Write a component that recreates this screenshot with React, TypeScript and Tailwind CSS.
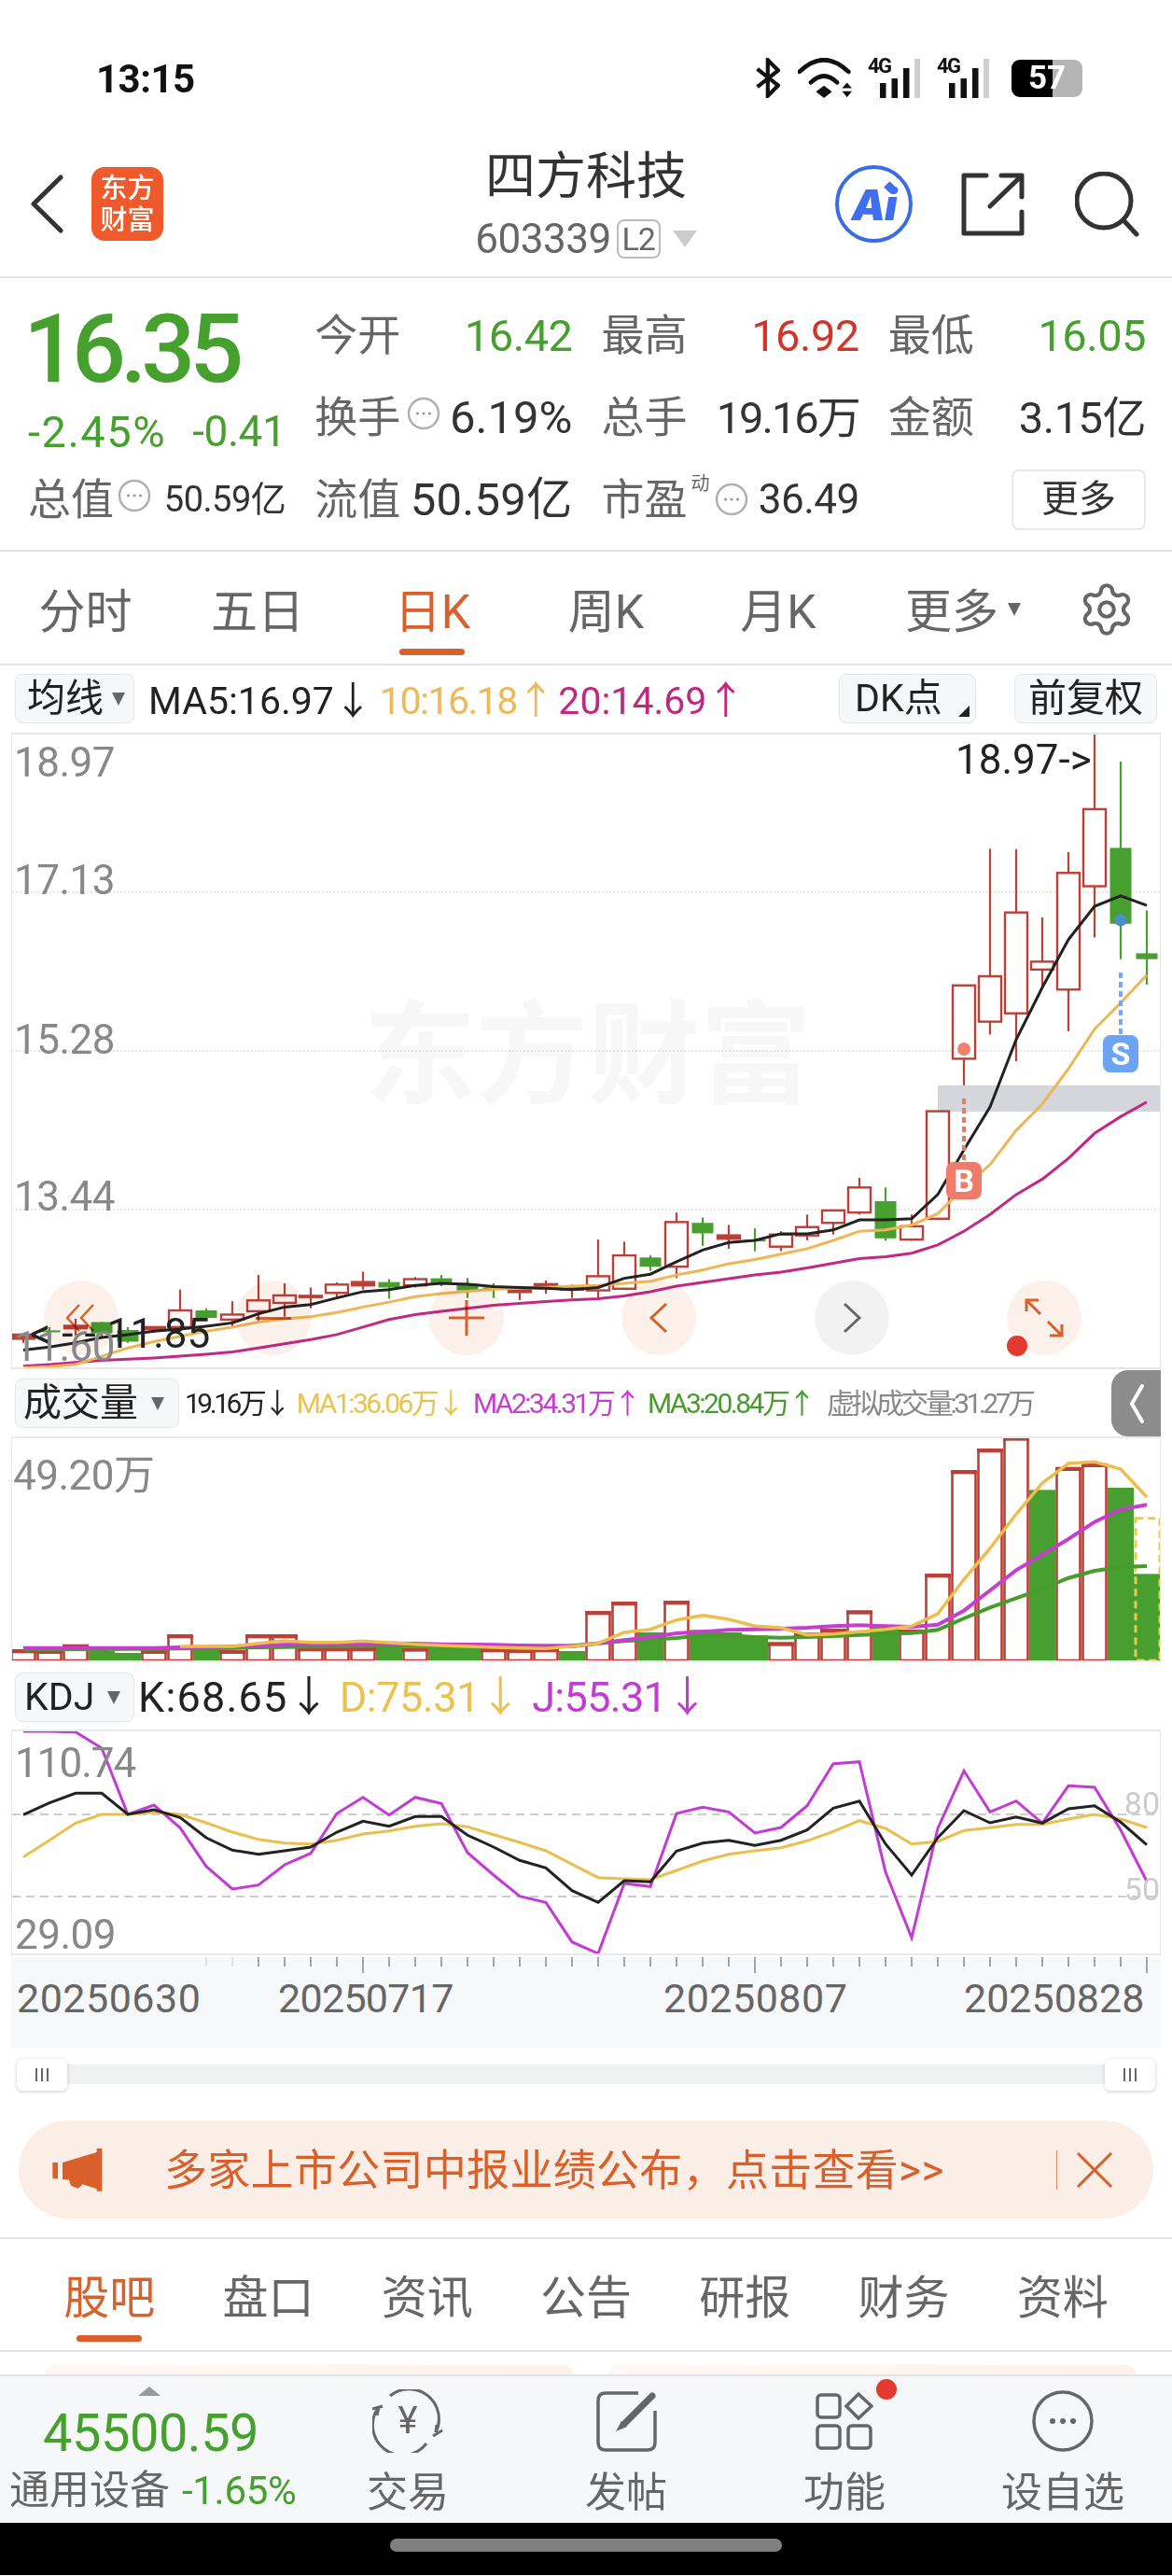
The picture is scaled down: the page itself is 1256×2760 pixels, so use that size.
import { Settings } from "lucide-react";

const RED = "#bc3f38";
const GREEN = "#469f2e";

// candle x in page px, 44 trading days
const cx = (i: number) => 25 + 28 * i;
// chart values were read off at these scales
const mainY = (v: number) => 780 + v / 2.24;
const volY = (v: number) => 1460 + v / 3;
const kdjY = (v: number) => 1780 + v / 3;

// wickTop, wickBottom, bodyTop, up
const candles: [number, number, number, boolean][] = [
	[1458, 1478, 1458, true], [1440, 1480, 1448, false], [1420, 1460, 1437, true], [1428, 1465, 1428, false],
	[1440, 1478, 1447, false], [1440, 1447, 1440, true], [1350, 1440, 1400, true], [1395, 1420, 1400, false],
	[1378, 1440, 1410, true], [1315, 1425, 1376, true], [1335, 1415, 1364, true], [1345, 1395, 1365, true],
	[1333, 1370, 1338, true], [1307, 1350, 1332, true], [1325, 1372, 1332, false], [1320, 1345, 1325, true],
	[1315, 1342, 1323, false], [1322, 1370, 1337, false], [1335, 1370, 1345, false], [1345, 1375, 1350, true],
	[1328, 1360, 1337, true], [1338, 1370, 1345, true], [1230, 1370, 1318, true], [1235, 1350, 1268, true],
	[1268, 1305, 1273, false], [1165, 1322, 1188, true], [1177, 1245, 1190, false], [1195, 1252, 1220, true],
	[1203, 1258, 1230, false], [1210, 1258, 1218, true], [1170, 1232, 1200, true], [1160, 1218, 1160, true],
	[1082, 1170, 1105, true], [1105, 1233, 1138, false], [1170, 1233, 1198, true], [922, 1180, 922, true],
	[620, 860, 620, true], [292, 738, 598, true], [293, 802, 445, true], [457, 625, 563, true],
	[300, 730, 350, true], [15, 505, 197, true], [83, 557, 290, false], [440, 618, 543, false],
];
const bodyBottoms = [
	1468, 1451, 1443, 1455, 1475, 1445, 1440, 1418, 1422, 1402, 1382, 1368, 1358, 1340, 1345, 1340, 1335, 1352, 1348, 1356, 1347, 1350,
	1352, 1348, 1295, 1295, 1215, 1228, 1233, 1247, 1220, 1190, 1165, 1227, 1230, 1180, 796, 707, 687, 582, 630, 382, 472, 557,
];

const maMain = {
	black: [1495, 1488, 1478, 1465, 1458, 1450, 1445, 1438, 1430, 1408, 1392, 1386, 1370, 1355, 1350, 1340, 1335, 1337, 1343, 1345, 1347, 1350, 1345, 1323, 1313, 1283, 1255, 1237, 1232, 1216, 1216, 1207, 1183, 1183, 1180, 1122, 1015, 912, 750, 625, 510, 430, 405, 428],
	yellow: [1538, 1535, 1530, 1510, 1490, 1475, 1462, 1450, 1440, 1428, 1420, 1415, 1405, 1392, 1380, 1367, 1360, 1354, 1349, 1347, 1345, 1342, 1340, 1335, 1330, 1315, 1303, 1288, 1278, 1265, 1252, 1232, 1210, 1207, 1195, 1168, 1105, 1050, 968, 905, 820, 725, 662, 595],
	pink: [1534, 1530, 1525, 1520, 1517, 1514, 1510, 1505, 1500, 1490, 1480, 1470, 1458, 1440, 1422, 1410, 1402, 1395, 1388, 1383, 1379, 1375, 1372, 1365, 1355, 1342, 1333, 1324, 1315, 1308, 1298, 1287, 1276, 1271, 1263, 1243, 1210, 1170, 1122, 1085, 1035, 975, 935, 900],
};

const volBars: [number, boolean][] = [
	[928, true], [930, true], [912, true], [930, false], [936, false], [930, true], [880, true], [920, false], [930, true], [880, true], [880, true],
	[922, true], [922, true], [922, true], [915, false], [923, true], [915, false], [915, false], [925, true], [927, true], [925, true], [930, false],
	[805, true], [775, true], [870, false], [772, true], [862, false], [870, false], [880, false], [905, true], [875, true], [862, true], [803, true],
	[848, false], [865, true], [685, true], [352, true], [283, true], [245, true], [412, false], [342, true], [330, true], [405, false], [682, false],
];
const volYellow = [915, 915, 915, 905, 897, 902, 902, 898, 903, 908, 912, 915, 918, 920, 922, 915, 905, 870, 860, 830, 815, 828, 850, 855, 878, 875, 868, 860, 850, 810, 700, 600, 490, 390, 327, 322, 345, 435];
const volPink = [920, 920, 920, 920, 920, 920, 918, 917, 915, 912, 910, 909, 908, 906, 905, 906, 908, 909, 910, 912, 915, 915, 905, 895, 885, 873, 868, 862, 860, 858, 855, 850, 847, 850, 852, 845, 800, 735, 670, 620, 570, 515, 475, 460];
const volGreen = [925, 925, 924, 924, 923, 923, 922, 921, 920, 918, 917, 916, 915, 914, 913, 913, 913, 913, 913, 913, 913, 913, 905, 898, 893, 888, 880, 880, 885, 887, 885, 882, 878, 875, 872, 862, 825, 790, 760, 730, 695, 672, 660, 657];

const kdjK = [496, 458, 427, 427, 495, 480, 505, 570, 610, 623, 612, 600, 552, 517, 533, 502, 502, 562, 600, 643, 667, 740, 778, 708, 712, 613, 587, 578, 595, 578, 545, 475, 452, 590, 690, 570, 483, 522, 503, 523, 477, 467, 520, 593];
const kdjD = [632, 578, 523, 495, 495, 488, 495, 522, 552, 575, 587, 590, 578, 558, 548, 533, 525, 535, 560, 585, 612, 655, 698, 702, 705, 675, 645, 623, 612, 602, 580, 550, 515, 540, 590, 582, 547, 538, 527, 527, 510, 495, 510, 537];
const kdjJ = [228, 228, 230, 282, 495, 465, 538, 662, 735, 722, 657, 620, 492, 440, 497, 440, 460, 618, 690, 758, 778, 905, 942, 717, 727, 492, 472, 487, 555, 537, 467, 332, 326, 680, 892, 540, 355, 487, 452, 523, 403, 408, 545, 710];

const pts = (vals: number[], toY: (v: number) => number, start = 0) =>
	vals.map((v, i) => `${cx(i + start)},${toY(v).toFixed(1)}`).join(" ");

function Tri({ className }: { className: string }) {
	return <span className={`inline-block border-x-[7px] border-t-[14px] border-x-transparent ${className}`} />;
}

function Dots({ className }: { className: string }) {
	return (
		<svg viewBox="0 0 36 36" className={className}>
			<circle cx="18" cy="18" r="16" fill="none" stroke="#b0b0b0" strokeWidth="2.5" />
			<circle cx="11.5" cy="18" r="1.6" fill="#999" />
			<circle cx="18" cy="18" r="1.6" fill="#999" />
			<circle cx="24.5" cy="18" r="1.6" fill="#999" />
		</svg>
	);
}

function Signal() {
	return (
		<div className="relative w-[57px] h-[43px]">
			<span className="absolute left-0 top-0 text-[22px] leading-[18px] font-bold tracking-[-1.5px] text-[#111]">4G</span>
			<svg viewBox="0 0 57 43" className="absolute inset-0 w-[57px] h-[43px]">
				<rect x="13" y="27" width="6.5" height="16" fill="#111" />
				<rect x="25.5" y="22" width="6.5" height="21" fill="#111" />
				<rect x="38" y="11" width="6.5" height="32" fill="#111" />
				<rect x="50" y="1" width="6" height="42" fill="#cfcfcf" />
			</svg>
		</div>
	);
}

function StatusBar() {
	return (
		<div className="h-[150px] pt-[62px] pl-[103px] pr-[96px] flex items-start justify-between">
			<div className="text-[42px] leading-[43px] font-bold text-[#111] tracking-[-0.5px] mt-[1px]">13:15</div>
			<div className="flex items-center h-[43px]">
				<svg viewBox="20 18 85 134" className="w-[28px] h-[43px]">
					<path d="M30 55 L100 110 L65 145 V25 L100 60 L30 115" fill="none" stroke="#111" strokeWidth="13" />
				</svg>
				<svg viewBox="165 20 176 130" className="w-[58px] h-[43px] ml-[19px]">
					<path d="M170 65 Q250 -12 330 65" fill="none" stroke="#111" strokeWidth="14" strokeLinecap="round" />
					<path d="M207 100 Q250 58 293 100" fill="none" stroke="#111" strokeWidth="14" strokeLinecap="round" />
					<path d="M250 110 L276 130 L250 150 L224 130 Z" fill="#111" />
					<path d="M325 100 L341 118 H309 Z M309 128 H341 L325 148 Z" fill="#111" />
				</svg>
				<div className="ml-[17px]"><Signal /></div>
				<div className="ml-[17px]"><Signal /></div>
				<div className="ml-[23px] relative w-[76px] h-[40px] rounded-[9px] overflow-hidden bg-[#b4b4b4]">
					<div className="absolute left-0 top-0 h-full w-[44px] bg-black" />
					<div className="absolute inset-0 flex items-center justify-center text-[35px] font-bold leading-none text-white">57</div>
				</div>
			</div>
		</div>
	);
}

function NavBar() {
	return (
		<div className="h-[148px] border-b-2 border-[#e2e2e2] grid grid-cols-[1fr_auto_1fr] items-start">
			<div className="flex items-center pl-[32px] pt-[29px]">
				<svg viewBox="0 0 36 63" className="w-[36px] h-[63px]">
					<path d="M33 3 L4 31.5 L33 60" fill="none" stroke="#333" strokeWidth="5" strokeLinecap="round" strokeLinejoin="round" />
				</svg>
				<div className="ml-[30px] w-[77px] h-[79px] rounded-[14px] bg-[#ee5a2b] flex flex-col items-center justify-center text-white text-[29px] leading-[34px] font-medium">
					<span>东方</span>
					<span>财富</span>
				</div>
			</div>
			<div className="flex flex-col items-center pt-[8px]">
				<div className="text-[54px] leading-[64px] text-[#333]">四方科技</div>
				<div className="flex items-center mt-[13px] h-[42px]">
					<span className="text-[44px] leading-none text-[#666] tracking-[-0.5px]">603339</span>
					<span className="ml-[6px] w-[47px] h-[42px] rounded-[8px] border-2 border-[#bbb] flex items-center justify-center text-[34px] leading-none text-[#666] tracking-[-1px]">L2</span>
					<span className="ml-[13px] border-x-[13px] border-t-[18px] border-x-transparent border-t-[#ccc]" />
				</div>
			</div>
			<div className="flex items-center justify-end pr-[34px] pt-[27px]">
				<div className="relative w-[83px] h-[83px] rounded-full border-[4px] border-[#3b6de0] flex items-center justify-center font-['Inter',sans-serif] text-[46px] leading-none font-black italic text-[#3f6ff0] tracking-[-1px]">
					Ai
					<span className="absolute left-[50px] top-[15px] w-[9px] h-[9px] rotate-45 bg-[#3f6ff0]" />
				</div>
				<svg viewBox="0 0 68 68" className="w-[68px] h-[68px] ml-[52px]">
					<path d="M27 3 H3 V65 H65 V42" fill="none" stroke="#333" strokeWidth="5" strokeLinecap="round" strokeLinejoin="round" />
					<path d="M31 36 L64 4 M43 3 H65 V26" fill="none" stroke="#333" strokeWidth="5" strokeLinecap="round" strokeLinejoin="round" />
				</svg>
				<svg viewBox="0 0 70 70" className="w-[70px] h-[70px] ml-[54px]">
					<circle cx="31" cy="31" r="29" fill="none" stroke="#333" strokeWidth="5" />
					<path d="M52 52 L66 67" stroke="#333" strokeWidth="5" strokeLinecap="round" />
				</svg>
			</div>
		</div>
	);
}

function Stat({ label, value, color = "text-[#333]", size = "text-[47px] tracking-[-0.5px]" }: { label: string; value: string; color?: string; size?: string }) {
	return (
		<div className="flex items-center justify-between">
			<span className="text-[46px] text-[#666] leading-none">{label}</span>
			<span className={`leading-none ${size} ${color}`}>{value}</span>
		</div>
	);
}

function Quote() {
	return (
		<div className="h-[293px] border-b-2 border-[#e2e2e2] pl-[30px] pr-[28px] pt-[17px] grid grid-cols-4 gap-x-[31px] grid-rows-[88px_88px_88px] items-center">
			<div className="text-[102px] leading-none font-medium text-[#45a02e] tracking-[-6px] mt-[30px] -ml-[5px]">16.35</div>
			<Stat label="今开" value="16.42" color="text-[#45a02e]" />
			<Stat label="最高" value="16.92" color="text-[#d0352b]" />
			<Stat label="最低" value="16.05" color="text-[#45a02e]" />

			<div className="flex justify-between items-center leading-none text-[#45a02e] mt-[30px]">
				<span className="text-[47px] tracking-[1.5px]">-2.45%</span>
				<span className="text-[46px] tracking-[-0.5px]">-0.41</span>
			</div>
			<div className="flex items-center">
				<span className="text-[46px] text-[#666] leading-none">换手</span>
				<Dots className="w-[36px] h-[36px] ml-[7px] -mt-[8px]" />
				<span className="ml-auto text-[49px] leading-none text-[#333]">6.19%</span>
			</div>
			<Stat label="总手" value="19.16万" size="text-[47px] tracking-[-2px]" />
			<Stat label="金额" value="3.15亿" />

			<div className="flex items-center">
				<span className="text-[46px] text-[#666] leading-none">总值</span>
				<Dots className="w-[36px] h-[36px] ml-[4px] -mt-[8px]" />
				<span className="ml-auto text-[38px] leading-none text-[#333] tracking-[-0.5px]">50.59亿</span>
			</div>
			<Stat label="流值" value="50.59亿" size="text-[49px] tracking-[0.3px]" />
			<div className="flex items-center">
				<span className="text-[46px] text-[#666] leading-none">市盈</span>
				<span className="text-[20px] text-[#666] leading-none ml-[4px] -mt-[34px]">动</span>
				<Dots className="w-[36px] h-[36px] ml-[5px]" />
				<span className="ml-auto text-[44px] leading-none text-[#333] tracking-[-0.5px]">36.49</span>
			</div>
			<div className="flex justify-end">
				<div className="w-[144px] h-[65px] rounded-[8px] border-2 border-[#e8e8e8] flex items-center justify-center text-[40px] text-[#333] leading-none">更多</div>
			</div>
		</div>
	);
}

function ChartTabs() {
	return (
		<div className="h-[122px] border-b-2 border-[#e2e2e2] flex items-start pt-[35px] text-[50px] leading-[60px] text-[#666]">
			<div className="w-[183px] text-center">分时</div>
			<div className="w-[186px] text-center">五日</div>
			<div className="w-[189px] flex flex-col items-center text-[#d9602a]">
				<span>日K</span>
				<span className="w-[70px] h-[7px] rounded-full bg-[#d9602a] mt-[9px] -ml-[2px]" />
			</div>
			<div className="w-[183px] text-center">周K</div>
			<div className="w-[186px] text-center">月K</div>
			<div className="flex items-center ml-[43px]">
				<span>更多</span>
				<Tri className="ml-[10px] -mt-[6px] border-t-[#666]" />
			</div>
			<Settings className="ml-[61px] -mt-[4px] w-[62px] h-[62px] text-[#666]" strokeWidth={1.6} />
		</div>
	);
}

function ChipBtn({ label, w, children }: { label: string; w: string; children?: React.ReactNode }) {
	return (
		<div className={`relative flex items-center justify-center h-[53px] rounded-[8px] border border-[#e4e6ea] bg-[#f6f7f9] text-[#222] text-[41px] leading-none ${w}`}>
			{label}
			{children}
		</div>
	);
}

function MainToolbar() {
	return (
		<div className="h-[72px] pl-[16px] pr-[16px] pt-[9px] flex items-start">
			<ChipBtn label="均线" w="w-[128px] justify-start pl-[12px]">
				<Tri className="ml-[9px] border-t-[#666]" />
			</ChipBtn>
			<div className="h-[53px] flex items-center text-[41px] leading-none mt-[3px]">
				<span className="ml-[15px] text-[#222]">MA5:16.97↓</span>
				<span className="ml-[8px] text-[#edb95a] tracking-[-1.5px]">10:16.18↑</span>
				<span className="ml-[5px] text-[#c0287f]">20:14.69↑</span>
			</div>
			<div className="ml-auto flex gap-[41px]">
				<ChipBtn label="DK点" w="w-[147px] justify-start pl-[16px]">
					<span className="absolute right-[6px] bottom-[6px] border-l-[12px] border-b-[12px] border-l-transparent border-b-[#222]" />
				</ChipBtn>
				<ChipBtn label="前复权" w="w-[153px]" />
			</div>
		</div>
	);
}

function CandleSvg() {
	return (
		<svg viewBox="13 788 1230 678" className="absolute inset-0 w-[1230px] h-[678px]">
			{[957, 1127, 1297].map((y) => (
				<line key={y} x1="13" x2="1243" y1={y} y2={y} stroke="#cfcfcf" strokeDasharray="2 2" />
			))}
			<rect x="1005" y="1164" width="238" height="28" fill="#d5d6db" />
			{candles.map(([wt, wb, bt, up], i) => {
				const c = up ? RED : GREEN;
				const top = mainY(bt);
				const bottom = mainY(bodyBottoms[i]);
				const flat = bottom - top < 5;
				return (
					<g key={i}>
						<line x1={cx(i)} x2={cx(i)} y1={mainY(wt)} y2={mainY(wb)} stroke={c} strokeWidth="2.2" />
						{up ? (
							<rect x={cx(i) - 12} y={top} width="24" height={bottom - top} fill={flat ? c : "#fff"} stroke={c} strokeWidth="2.4" />
						) : (
							<rect x={cx(i) - 11.5} y={top} width="23" height={Math.max(bottom - top, 2)} fill={c} />
						)}
					</g>
				);
			})}
			<polyline points={pts(maMain.pink, mainY)} fill="none" stroke="#c02a86" strokeWidth="3" />
			<polyline points={pts(maMain.yellow, mainY)} fill="none" stroke="#eeb655" strokeWidth="3" />
			<polyline points={pts(maMain.black, mainY)} fill="none" stroke="#222" strokeWidth="3" />
			<line x1="1033" x2="1033" y1="1178" y2="1246" stroke="#df7d6f" strokeWidth="4" strokeDasharray="6 4" />
			<circle cx="1033" cy="1125" r="7" fill="#ef8070" />
			<line x1="1201" x2="1201" y1="1043" y2="1110" stroke="#7aa8ec" strokeWidth="4" strokeDasharray="6 4" />
			<circle cx="1201" cy="987" r="6.5" fill="#4a8fc8" />
		</svg>
	);
}

function RoundBtn({ pos, gray, children }: { pos: string; gray?: boolean; children: React.ReactNode }) {
	return (
		<div className={`absolute top-[585px] w-[80px] h-[80px] rounded-full mix-blend-multiply flex items-center justify-center ${gray ? "bg-[#f2f2f2]" : "bg-[#fbf0ea]"} ${pos}`}>
			{children}
		</div>
	);
}

function MainChart() {
	const label = "absolute left-[2px] text-[44px] leading-none text-[#888] tracking-[-0.5px]";
	return (
		<div className="relative mx-[12px] h-[682px] border-y-2 border-x border-[#e5e6e8]">
			<div className="absolute left-[377px] top-[280px] text-[120px] leading-[130px] font-bold text-[#f7f7f7] whitespace-nowrap">东方财富</div>
			<CandleSvg />
			<div className={`${label} top-[8px]`}>18.97</div>
			<div className={`${label} top-[134px]`}>17.13</div>
			<div className={`${label} top-[305px]`}>15.28</div>
			<div className={`${label} top-[473px]`}>13.44</div>
			<div className="absolute left-[1011px] top-[5px] text-[44px] leading-none text-[#222]">18.97-&gt;</div>
			<RoundBtn pos="left-[34px]">
				<svg viewBox="0 0 34 34" className="w-[34px] h-[34px]"><path d="M15 3 L2 17 L15 31 M30 3 L17 17 L30 31" fill="none" stroke="#d9602a" strokeWidth="2.5" /></svg>
			</RoundBtn>
			<RoundBtn pos="left-[240px]">
				<div className="w-[38px] h-[3px] bg-[#d9602a]" />
			</RoundBtn>
			<RoundBtn pos="left-[447px]">
				<svg viewBox="0 0 40 40" className="w-[40px] h-[40px]"><path d="M1 20 H39 M20 1 V39" stroke="#d9602a" strokeWidth="3" /></svg>
			</RoundBtn>
			<RoundBtn pos="left-[653px]">
				<svg viewBox="0 0 22 34" className="w-[22px] h-[34px]"><path d="M19 2 L3 17 L19 32" fill="none" stroke="#d9602a" strokeWidth="3" /></svg>
			</RoundBtn>
			<RoundBtn pos="left-[860px]" gray>
				<svg viewBox="0 0 22 34" className="w-[22px] h-[34px]"><path d="M3 2 L19 17 L3 32" fill="none" stroke="#666" strokeWidth="3" /></svg>
			</RoundBtn>
			<RoundBtn pos="left-[1066px]">
				<svg viewBox="0 0 42 42" className="w-[42px] h-[42px]"><path d="M2 14 V2 H15 M2 2 L17 17 M40 28 V40 H27 M40 40 L25 25" fill="none" stroke="#d9602a" strokeWidth="3" /></svg>
			</RoundBtn>
			<div className="absolute left-[1066px] top-[644px] w-[22px] h-[22px] rounded-full bg-[#e23a30]" />
			<div className="absolute left-[1001px] top-[458px] w-[38px] h-[40px] rounded-[8px] bg-[#ef7b6b] flex items-center justify-center text-white text-[34px] font-bold leading-none">B</div>
			<div className="absolute left-[1169px] top-[322px] w-[38px] h-[40px] rounded-[8px] bg-[#6ba4f5] flex items-center justify-center text-white text-[34px] font-bold leading-none">S</div>
			<div className={`${label} top-[634px]`}>11.60</div>
			<div className="absolute left-[19px] top-[620px] text-[44px] leading-none text-[#222] whitespace-nowrap">
				<span className="tracking-[12px]">&lt;--</span>
				<span>11.85</span>
			</div>
		</div>
	);
}

function VolumeHeader() {
	return (
		<div className="relative h-[72px] pl-[16px] pt-[10px] flex items-start">
			<ChipBtn label="成交量" w="w-[176px] justify-start pl-[8px]">
				<Tri className="ml-[14px] border-t-[#666]" />
			</ChipBtn>
			<div className="h-[53px] flex items-center text-[30px] leading-none tracking-[-2.5px] whitespace-nowrap">
				<span className="ml-[6px] text-[#222] tracking-[-3.5px]">19.16万↓</span>
				<span className="ml-[9px] text-[#e9c34f]">MA1:36.06万↓</span>
				<span className="ml-[11px] text-[#c63ed0]">MA2:34.31万↑</span>
				<span className="ml-[9px] text-[#489c2e]">MA3:20.84万↑</span>
				<span className="ml-[14px] text-[#888] tracking-[-3.5px]">虚拟成交量:31.27万</span>
			</div>
			<div className="absolute right-[12px] top-[1px] w-[53px] h-[71px] rounded-l-[18px] bg-[#8c8c8c] flex items-center justify-center">
				<svg viewBox="0 0 20 44" className="w-[20px] h-[44px]"><path d="M16 3 L5 22 L16 41" fill="none" stroke="#fff" strokeWidth="4" strokeLinecap="round" /></svg>
			</div>
		</div>
	);
}

function VolumeChart() {
	return (
		<div className="relative mx-[12px] h-[242px] border-y-2 border-x border-[#e8e9eb]">
			<svg viewBox="13 1542 1230 238" className="absolute inset-0 w-[1230px] h-[238px]">
				{volBars.map(([top, up], i) => {
					const y = volY(top);
					const bottom = volY(960);
					return up ? (
						<g key={i}>
							<rect x={cx(i) - 12.5} y={y} width="25" height={bottom - y} fill="#fff" stroke={RED} strokeWidth="2.6" />
							<rect x={cx(i) - 14} y={y - 1} width="28" height="4" fill={RED} />
						</g>
					) : (
						<rect key={i} x={cx(i) - 14} y={y} width="28" height={bottom - y} fill={GREEN} />
					);
				})}
				<rect x="1217" y={volY(503)} width="26" height={volY(960) - volY(503)} fill="none" stroke="#eec64f" strokeWidth="3" strokeDasharray="8 5" />
				<polyline points={pts(volGreen, volY)} fill="none" stroke="#489c2e" strokeWidth="4" />
				<polyline points={pts(volPink, volY)} fill="none" stroke="#c63ed0" strokeWidth="4" />
				<polyline points={pts(volYellow, volY, 6)} fill="none" stroke="#eebd4e" strokeWidth="3.5" />
			</svg>
			<div className="absolute left-[1px] top-[18px] text-[44px] leading-none text-[#888] tracking-[-0.5px]">49.20万</div>
		</div>
	);
}

function KdjHeader() {
	return (
		<div className="h-[72px] pl-[16px] pt-[11px] flex items-start">
			<ChipBtn label="KDJ" w="w-[128px] justify-start pl-[9px]">
				<Tri className="ml-[14px] border-t-[#666]" />
			</ChipBtn>
			<div className="h-[53px] flex items-center text-[45px] leading-none whitespace-nowrap">
				<span className="ml-[4px] text-[#222] tracking-[1.2px]">K:68.65↓</span>
				<span className="ml-[9px] text-[#ecc24e] tracking-[-0.5px]">D:75.31↓</span>
				<span className="ml-[12px] text-[#c23bd4] tracking-[-0.7px]">J:55.31↓</span>
			</div>
		</div>
	);
}

function KdjChart() {
	return (
		<div className="relative mx-[12px] h-[242px] border-y-2 border-x border-[#e8e9eb]">
			<svg viewBox="13 1856 1230 238" className="absolute inset-0 w-[1230px] h-[238px]">
				<line x1="13" x2="1243" y1="1945" y2="1945" stroke="#ccc" strokeWidth="2" strokeDasharray="9 6" />
				<line x1="13" x2="1243" y1="2033" y2="2033" stroke="#ccc" strokeWidth="2" strokeDasharray="9 6" />
				<polyline points={pts(kdjJ, kdjY)} fill="none" stroke="#c23bd4" strokeWidth="3" />
				<polyline points={pts(kdjD, kdjY)} fill="none" stroke="#ebbe50" strokeWidth="3" />
				<polyline points={pts(kdjK, kdjY)} fill="none" stroke="#222" strokeWidth="3" />
			</svg>
			<div className="absolute left-[3px] top-[12px] text-[44px] leading-none text-[#888] tracking-[-1px]">110.74</div>
			<div className="absolute left-[3px] top-[196px] text-[44px] leading-none text-[#888] tracking-[-0.5px]">29.09</div>
			<div className="absolute right-0 top-[60px] text-[34px] leading-none text-[#ccc]">80</div>
			<div className="absolute right-0 top-[152px] text-[34px] leading-none text-[#ccc]">50</div>
		</div>
	);
}

function TimeAxis() {
	return (
		<div className="relative mx-[12px] mt-[2px] h-[97px] bg-[#f7f8fa] pl-[6px] pt-[24px] flex items-start text-[43px] leading-[40px] text-[#666]">
			<svg viewBox="12 2098 1232 20" className="absolute left-0 top-0 w-[1232px] h-[20px]">
				{Array.from({ length: 37 }, (_, k) => k + 7).map((i) => {
					const major = i === 13 || i === 28 || i === 43;
					return <line key={i} x1={cx(i)} x2={cx(i)} y1="2098" y2={major ? 2115 : 2108} stroke={i < 9 ? "#ddd" : "#888"} strokeWidth="1.5" />;
				})}
			</svg>
			<div className="w-[280px] tracking-[0.5px]">20250630</div>
			<div className="w-[413px] tracking-[-0.7px]">20250717</div>
			<div className="w-[322px] tracking-[0.5px]">20250807</div>
			<div>20250828</div>
		</div>
	);
}

function Handle() {
	return (
		<div className="w-[54px] h-[34px] rounded-[6px] bg-white shadow-[0_1px_4px_rgba(0,0,0,0.2)] flex items-center justify-center gap-[4px]">
			<span className="w-[2px] h-[14px] bg-[#666]" />
			<span className="w-[2px] h-[14px] bg-[#666]" />
			<span className="w-[2px] h-[14px] bg-[#666]" />
		</div>
	);
}

function RangeSlider() {
	return (
		<div className="h-[78px] px-[18px] pt-[12px]">
			<div className="relative flex items-center justify-between h-[34px]">
				<div className="absolute left-[20px] right-[20px] top-[6px] bottom-[7px] bg-[#f0f1f3]" />
				<div className="relative"><Handle /></div>
				<div className="relative"><Handle /></div>
			</div>
		</div>
	);
}

function Banner() {
	return (
		<div className="mx-[20px] h-[105px] rounded-full bg-[#fbeee7] flex items-center pl-[36px] pr-[43px] text-[46px] leading-none text-[#d9602a]">
			<svg viewBox="48 35 160 138" className="w-[54px] h-[46px] shrink-0">
				<path d="M48 80 H65 V132 H48 Z M80 80 L190 47 V35 H207 V172 H190 V165 L145 150 L130 163 L108 155 L100 135 H80 Z" fill="#d9602a" />
			</svg>
			<span className="ml-[66px] whitespace-nowrap tracking-[0.3px]">多家上市公司中报业绩公布，点击查看&gt;&gt;</span>
			<span className="ml-auto w-px h-[42px] bg-[#d9602a]/70" />
			<svg viewBox="0 0 40 38" className="w-[40px] h-[38px] ml-[20px]">
				<path d="M2 1 L38 37 M38 1 L2 37" stroke="#d9602a" strokeWidth="3" />
			</svg>
		</div>
	);
}

const infoTabs = ["股吧", "盘口", "资讯", "公告", "研报", "财务", "资料"];

function InfoTabs() {
	return (
		<div className="mt-[20px] h-[123px] border-y-2 border-[#e2e2e2] px-[32px] pt-[36px] grid grid-cols-7 text-[49px] leading-[56px] text-[#666] text-center">
			{infoTabs.map((t, i) => (
				<div key={t} className={i === 0 ? "flex flex-col items-center text-[#d9602a]" : ""}>
					<span>{t}</span>
					{i === 0 && <span className="w-[70px] h-[7px] rounded-full bg-[#d9602a] mt-[11px]" />}
				</div>
			))}
		</div>
	);
}

function PeekCards() {
	return (
		<div className="h-[24px] pl-[48px] pr-[38px] pt-[14px] flex gap-[38px]">
			<div className="flex-1 rounded-t-[24px] bg-linear-to-r from-[#fef7f3] to-[#fdf1eb]" />
			<div className="flex-1 rounded-t-[24px] bg-linear-to-r from-[#fef7f3] to-[#fdf1eb]" />
		</div>
	);
}

function BottomItem({ label, children }: { label: string; children: React.ReactNode }) {
	return (
		<div className="relative w-[234px] flex flex-col items-center pt-[13px]">
			<div className="h-[70px] flex items-center justify-center">{children}</div>
			<div className="mt-[17px] text-[44px] leading-[50px] text-[#666]">{label}</div>
		</div>
	);
}

function BottomBar() {
	return (
		<div className="h-[159px] border-t-2 border-[#e2e2e2] bg-[#f6f7f9] flex">
			<div className="w-[320px] flex flex-col pt-[11px]">
				<span className="self-center -ml-[1px] border-x-[12px] border-b-[10px] border-x-transparent border-b-[#999]" />
				<div className="mt-[14px] pl-[46px] text-[56px] leading-[52px] text-[#45a02e] tracking-[-0.5px]">45500.59</div>
				<div className="mt-[14px] pl-[10px] flex items-center leading-none whitespace-nowrap">
					<span className="text-[43px] text-[#666]">通用设备</span>
					<span className="ml-[13px] text-[42px] text-[#45a02e] tracking-[-0.3px]">-1.65%</span>
				</div>
			</div>
			<BottomItem label="交易">
				<div className="relative w-[76px] h-[68px] flex items-center justify-center text-[40px] leading-none text-[#666]">
					<svg viewBox="0 0 76 68" className="absolute inset-0 w-[76px] h-[68px]">
						<path d="M19 7 A32 32 0 0 1 68 46" fill="none" stroke="#666" strokeWidth="3" />
						<path d="M58 58 A32 32 0 0 1 7 19" fill="none" stroke="#666" strokeWidth="3" />
						<path d="M65 50 L75 44 M68 46 L69 38" fill="none" stroke="#666" strokeWidth="3" />
						<path d="M0 21 L11 18 M7 19 L5 28" fill="none" stroke="#666" strokeWidth="3" />
					</svg>
					¥
				</div>
			</BottomItem>
			<BottomItem label="发帖">
				<svg viewBox="0 0 65 65" className="w-[65px] h-[65px]">
					<path d="M45 2 H10 Q2 2 2 10 V55 Q2 63 10 63 H55 Q63 63 63 55 V21" fill="none" stroke="#666" strokeWidth="3.5" />
					<path d="M60 5 L30 35" fill="none" stroke="#666" strokeWidth="7" strokeLinecap="round" />
					<path d="M33 38 L27 32 L21 43 Z" fill="#666" />
				</svg>
			</BottomItem>
			<BottomItem label="功能">
				<svg viewBox="0 0 62 62" className="w-[62px] h-[62px]">
					<rect x="2" y="3" width="24" height="24" rx="4" fill="none" stroke="#666" strokeWidth="3.5" />
					<path d="M46 2 L60 15 L46 28 L33 15 Z" fill="none" stroke="#666" strokeWidth="3.5" />
					<rect x="2" y="36" width="24" height="24" rx="4" fill="none" stroke="#666" strokeWidth="3.5" />
					<rect x="35" y="36" width="24" height="24" rx="4" fill="none" stroke="#666" strokeWidth="3.5" />
				</svg>
				<span className="absolute left-[151px] top-[3px] w-[22px] h-[22px] rounded-full bg-[#e23a30]" />
			</BottomItem>
			<BottomItem label="设自选">
				<svg viewBox="0 0 66 66" className="w-[66px] h-[66px]">
					<circle cx="33" cy="33" r="31" fill="none" stroke="#666" strokeWidth="3.5" />
					<circle cx="22" cy="33" r="3" fill="#666" />
					<circle cx="33" cy="33" r="3" fill="#666" />
					<circle cx="44" cy="33" r="3" fill="#666" />
				</svg>
			</BottomItem>
		</div>
	);
}

export default function App() {
	return (
		<div className="w-[1256px] h-[2760px] bg-white flex flex-col overflow-hidden font-['Roboto','Noto_Sans_CJK_SC',sans-serif]">
			<StatusBar />
			<NavBar />
			<Quote />
			<ChartTabs />
			<MainToolbar />
			<MainChart />
			<VolumeHeader />
			<VolumeChart />
			<KdjHeader />
			<KdjChart />
			<TimeAxis />
			<RangeSlider />
			<Banner />
			<InfoTabs />
			<PeekCards />
			<BottomBar />
			<div className="h-[56px] bg-black flex justify-center pt-[17px]">
				<div className="w-[420px] h-[14px] rounded-full bg-[#808080]" />
			</div>
		</div>
	);
}
